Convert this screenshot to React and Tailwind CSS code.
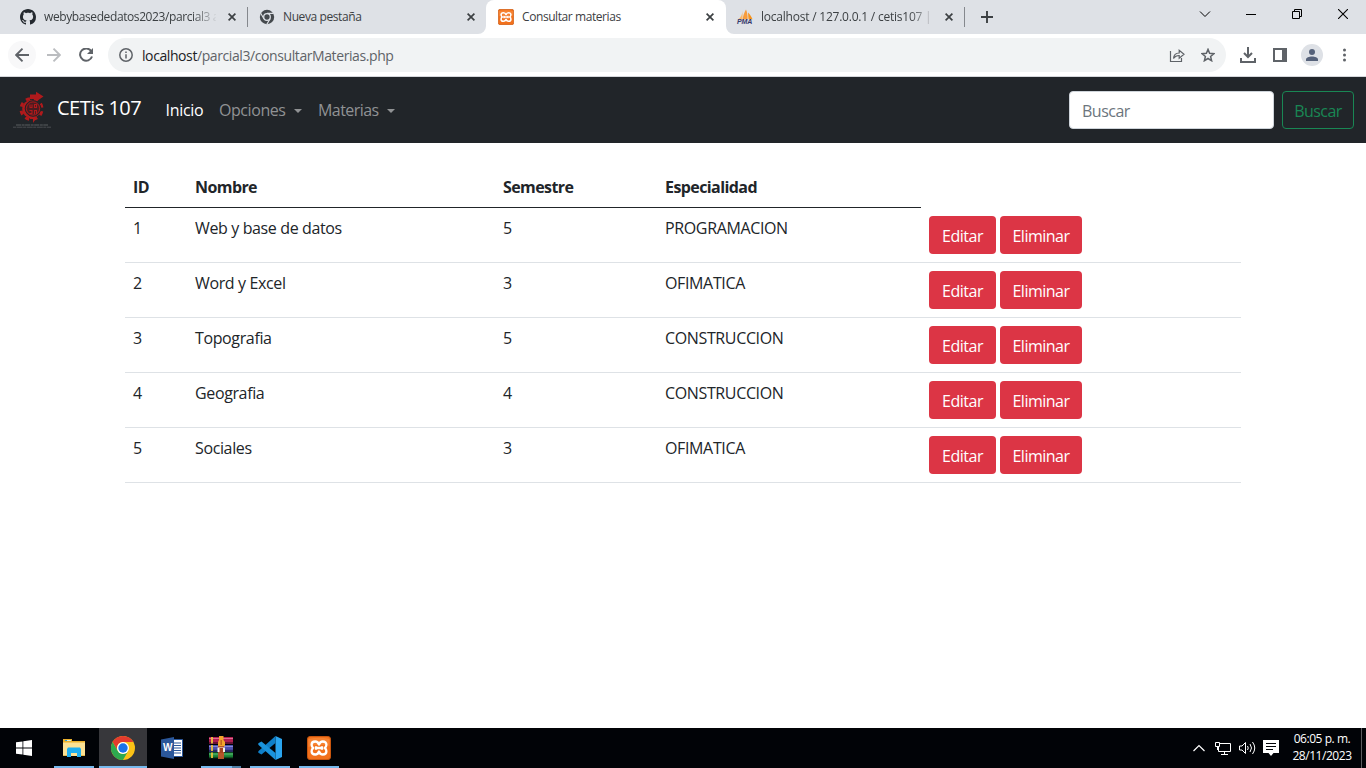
import React from "react";

const rows = [
  { id: 1, nombre: "Web y base de datos", semestre: 5, especialidad: "PROGRAMACION" },
  { id: 2, nombre: "Word y Excel", semestre: 3, especialidad: "OFIMATICA" },
  { id: 3, nombre: "Topografia", semestre: 5, especialidad: "CONSTRUCCION" },
  { id: 4, nombre: "Geografia", semestre: 4, especialidad: "CONSTRUCCION" },
  { id: 5, nombre: "Sociales", semestre: 3, especialidad: "OFIMATICA" },
];

function GithubIcon() {
  return (
    <svg className="size-4 shrink-0" viewBox="0 0 16 16" fill="#24292f">
      <path d="M8 0C3.58 0 0 3.58 0 8c0 3.54 2.29 6.53 5.47 7.59.4.07.55-.17.55-.38 0-.19-.01-.82-.01-1.49-2.01.37-2.53-.49-2.69-.94-.09-.23-.48-.94-.82-1.13-.28-.15-.68-.52-.01-.53.63-.01 1.08.58 1.23.82.72 1.21 1.87.87 2.33.66.07-.52.28-.87.51-1.07-1.78-.2-3.64-.89-3.64-3.95 0-.87.31-1.59.82-2.15-.08-.2-.36-1.02.08-2.12 0 0 .67-.21 2.2.82.64-.18 1.32-.27 2-.27s1.36.09 2 .27c1.53-1.04 2.2-.82 2.2-.82.44 1.1.16 1.92.08 2.12.51.56.82 1.27.82 2.15 0 3.07-1.87 3.75-3.65 3.95.29.25.54.73.54 1.48 0 1.07-.01 1.93-.01 2.2 0 .21.15.46.55.38A8.01 8.01 0 0 0 16 8c0-4.42-3.58-8-8-8z" />
    </svg>
  );
}

function ChromeMonoIcon() {
  return (
    <svg className="size-4 shrink-0" viewBox="0 0 16 16">
      <circle cx="8" cy="8" r="7.2" fill="#45494d" />
      <circle cx="8" cy="8" r="3.3" fill="#45494d" stroke="#dee1e6" strokeWidth="1.3" />
      <path d="M8 4.4h6.6M4.9 9.8 1.7 4.2M11.1 9.8 7.8 15.4" stroke="#dee1e6" strokeWidth="1.1" />
    </svg>
  );
}

function XamppIcon({ className }) {
  return (
    <svg className={className} viewBox="0 0 24 24">
      <rect x="0.5" y="0.5" width="23" height="23" rx="2.6" fill="#f2711c" stroke="#c9560e" />
      <path d="M1.500 3Q12 .5 22.500 3v7Q12 7 1.500 11z" fill="#fb9548" opacity=".5" />
      <path
        d="M12 8.500C11.300 6.500 10 5.500 8.200 5.500 6 5.500 4.600 6.900 4.600 8.800c0 1.400.6 2.500 1.700 3.200-1.100.7-1.700 1.800-1.700 3.200 0 1.900 1.400 3.300 3.600 3.300 1.800 0 3.100-1 3.800-3 .7 2 2 3 3.800 3 2.200 0 3.600-1.400 3.600-3.300 0-1.400-.6-2.500-1.700-3.200 1.100-.7 1.700-1.800 1.700-3.200 0-1.900-1.400-3.300-3.600-3.300-1.800 0-3.100 1-3.800 3zM9 10.300v3.400M15 10.300v3.400M9 12h6"
        fill="none"
        stroke="#fff"
        strokeWidth="2.300"
        strokeLinejoin="round"
      />
    </svg>
  );
}

function PmaIcon() {
  return (
    <span className="relative block size-4 shrink-0">
      <svg className="size-4" viewBox="0 0 16 16">
        <path d="M5.500 1.500C5.600 5 4 8.500 1 10.500l4.500-.3z" fill="#fbb868" />
        <path d="M9 .5C7 4 6 7 5.800 10.300h4.800C10.700 6.500 10.200 3 9 .5z" fill="#f89c3c" />
        <path d="M11 3.500c2 2 3.600 4.300 4.500 6.800h-4z" fill="#f7941d" />
      </svg>
      <b className="absolute top-[10px] left-0 block font-['Liberation_Sans'] text-[7px] leading-[6px] tracking-[-0.1px] text-[#35386b] italic">PMA</b>
    </span>
  );
}

function CloseX() {
  return (
    <svg className="size-[8px] shrink-0" viewBox="0 0 8 8">
      <path d="M.6.600l6.800 6.800M7.400.6.600 7.400" stroke="#3c4043" strokeWidth="1.700" />
    </svg>
  );
}

function Tab({ icon, title, active, fade, divider, className }) {
  return (
    <div
      className={
        "relative flex h-[34px] shrink-0 items-center " +
        (active ? "rounded-t-lg bg-white " : "") +
        className
      }
    >
      {active && (
        <>
          <svg className="absolute bottom-0 -left-2 size-2" viewBox="0 0 8 8"><path d="M8 0v8H0a8 8 0 0 0 8-8z" fill="#fff" /></svg>
          <svg className="absolute -right-2 bottom-0 size-2" viewBox="0 0 8 8"><path d="M0 0v8h8a8 8 0 0 1-8-8z" fill="#fff" /></svg>
        </>
      )}
      {icon}
      <div
        className={
          "ml-2 h-[18px] w-[172px] text-[12px] leading-[18px] whitespace-nowrap text-[#3c4043]" +
          (fade ? " [mask-image:linear-gradient(to_right,#000_148px,transparent_174px)]" : "")
        }
      >
        {title}
      </div>
      <div className="ml-3"><CloseX /></div>
      {divider && <div className="absolute top-[7px] right-0 h-5 w-px bg-[#85888d]" />}
    </div>
  );
}

function TabStrip() {
  return (
    <div className="flex h-[34px] bg-[#dee1e6] pl-2">
      <Tab icon={<GithubIcon />} title="webybasededatos2023/parcial3 a" className="w-[240px] pl-3 tracking-[-0.4px]" fade divider />
      <Tab icon={<ChromeMonoIcon />} title="Nueva pestaña" className="w-[238px] pl-[11px] tracking-[-0.4px]" />
      <Tab icon={<XamppIcon className="size-4 shrink-0" />} title="Consultar materias" className="w-[240px] pl-3 tracking-[-0.42px]" active />
      <Tab icon={<PmaIcon />} title="localhost / 127.0.0.1 / cetis107 | p" className="w-[239px] pl-[11px] tracking-[-0.22px]" fade divider />
      <svg className="mt-[11px] ml-4 size-3" viewBox="0 0 12 12"><path d="M6 0v12M0 6h12" stroke="#3c4043" strokeWidth="1.900" /></svg>
      <div className="mr-[18px] ml-auto flex h-7 items-center text-black">
        <svg className="w-3" viewBox="0 0 12 12" fill="none" stroke="currentColor"><path d="m1 3.500 5 5 5-5" /></svg>
        <svg className="ml-[35px] w-[10px]" viewBox="0 0 10 10" fill="none" stroke="currentColor"><path d="M0 5.500h10" /></svg>
        <svg className="ml-9 w-[10px]" viewBox="0 0 10 10" fill="none" stroke="currentColor"><path d="M.5 2.500h7v7h-7zM2.500 2.500v-2h7v7h-2" /></svg>
        <svg className="ml-9 w-[10px]" viewBox="0 0 10 10" fill="none" stroke="currentColor" strokeWidth="1.100"><path d="m0 0 10 10M10 0 0 10" /></svg>
      </div>
    </div>
  );
}

function Toolbar() {
  return (
    <div className="flex h-[43px] items-center border-b border-[#d5d7db] bg-white pl-2">
      <div className="flex size-7 items-center justify-center rounded-full bg-[#f8f8f9]">
        <svg className="size-[14px]" viewBox="0 0 14 14" fill="none" stroke="#5f6368" strokeWidth="1.900"><path d="M14 7H1.500M7.500.700 1.200 7l6.300 6.300" /></svg>
      </div>
      <svg className="ml-[11px] size-[14px]" viewBox="0 0 14 14" fill="none" stroke="#bbbdc0" strokeWidth="1.900"><path d="M0 7h12.500M6.500.700 12.800 7l-6.300 6.300" /></svg>
      <svg className="ml-[18px] size-[14px]" viewBox="0 0 14 14"><path d="M12.300 3.300A6.100 6.100 0 1 0 13 8.500" fill="none" stroke="#5f6368" strokeWidth="2" /><path d="M14 0v6H8z" fill="#5f6368" /></svg>
      <div className="ml-[15px] flex h-[34px] w-[1118px] items-center rounded-full bg-[#f1f3f4] pl-[11px]">
        <svg className="size-[14px]" viewBox="0 0 14 14"><circle cx="7" cy="7" r="6.200" fill="none" stroke="#5f6368" strokeWidth="1.500" /><path d="M7 6.200v4.300M7 3.500v1.500" stroke="#5f6368" strokeWidth="1.500" /></svg>
        <span className="ml-[9px] text-[14px] tracking-[-0.41px] text-[#5f6368]"><span className="text-[#202124]">localhost</span>/parcial3/consultarMaterias.php</span>
        <svg className="mr-4 ml-auto size-[16px]" viewBox="0 0 16 16" fill="none" stroke="#5f6368" strokeWidth="1.200"><path d="M1.500 4v10.500h11v-3.500M4.500 11.500c.3-3.600 2.300-5.400 5.700-5.500V3.200L15 7.300l-4.800 3.900V8.500c-2.600-.1-4.300.9-5.700 3z" /></svg>
        <svg className="mr-[11px] size-[14px]" viewBox="0 0 14 14" fill="none" stroke="#5f6368" strokeWidth="1.500"><path d="m7 1.400 1.600 3.900 4.200.4-3.200 2.800 1 4.200L7 10.500l-3.600 2.200 1-4.200-3.200-2.800 4.200-.4z" /></svg>
      </div>
      <svg className="ml-[14px] size-4" viewBox="0 0 16 16" fill="none" stroke="#5f6368" strokeWidth="2"><path d="M8 0v9.500M4 6l4 4 4-4M1 11v4h14v-4" /></svg>
      <svg className="ml-[17px] size-[14px]" viewBox="0 0 14 14"><path d="M1 1h12v12H1z" fill="none" stroke="#5f6368" strokeWidth="2" /><path d="M9 1h4v12H9z" fill="#5f6368" /></svg>
      <div className="ml-[14px] flex size-[22px] items-center justify-center rounded-full bg-[#dee1e6]">
        <svg className="size-3" viewBox="0 0 12 12" fill="#56627a"><circle cx="6" cy="3" r="3" /><path d="M0 12v-1.500C0 8.500 3 7.500 6 7.500s6 1 6 3V12z" /></svg>
      </div>
      <svg className="ml-[19px] h-[14px] w-[4px]" viewBox="0 0 4 14" fill="#5f6368"><circle cx="2.500" cy="2" r="1.500" /><circle cx="2.500" cy="7" r="1.500" /><circle cx="2.500" cy="12" r="1.500" /></svg>
    </div>
  );
}

function SchoolLogo() {
  return (
    <svg className="h-[38px] w-[38px] shrink-0" viewBox="0 0 38 38">
      <circle cx="18.500" cy="18" r="10.500" fill="none" stroke="#b01a1c" strokeWidth="3" strokeDasharray="4.200 4.047" transform="rotate(12 18.500 18)" />
      <circle cx="18.500" cy="18" r="9.300" fill="#b01a1c" />
      <path d="M17 3.500h6V.800l7.500 4.700-6.500 4.500V8h-7zM17 26h5v3l-2 3v-4h-3z" fill="#b01a1c" />
      <circle cx="20" cy="17.500" r="7.800" fill="#4a1c20" stroke="#212529" strokeWidth="1" />
      <circle cx="20" cy="17.500" r="6.600" fill="none" stroke="#b01a1c" strokeWidth=".9" />
      <path d="M17 13.500v3h2v-3M21.500 16.500v-3h2v3zM16.500 19.500h2.500v3h-2.500M21.500 23v-3.500h2V23" stroke="#b01a1c" strokeWidth="1.100" fill="none" />
      <path d="M3 34h32" stroke="#5b5e61" strokeDasharray="5 .6 3 .5" />
      <path d="M0 36.200h38" stroke="#4b4e51" strokeDasharray="3 .6 6 .5" />
    </svg>
  );
}

function Caret({ className }) {
  return <span className={"inline-block border-x-[4.800px] border-t-[4.800px] border-x-transparent border-t-current align-[3px] " + className} />;
}

function Navbar() {
  return (
    <nav className="flex h-[66px] items-center bg-[#212529] pr-3 pl-[13px]">
      <SchoolLogo />
      <span className="-mt-[5px] ml-[6px] w-[108px] text-[20px] leading-[30px] tracking-[-0.52px] whitespace-nowrap text-white">CETis 107</span>
      <span className="w-[54px] pl-[0.500px] text-[16px] tracking-[-0.3px] text-white">Inicio</span>
      <span className="w-[99px] text-[16px] tracking-[-0.43px] whitespace-nowrap text-[#909294]">Opciones<Caret className="ml-[8.500px]" /></span>
      <span className="text-[16px] tracking-[-0.57px] whitespace-nowrap text-[#909294]">Materias<Caret className="ml-[8.500px]" /></span>
      <input
        placeholder="Buscar"
        className="ml-auto h-[38px] w-[205px] rounded-[4px] border border-[#ced4da] bg-white px-3 pt-px text-[16px] tracking-[-0.5px] placeholder:text-[#6c757d]"
      />
      <button className="ml-2 h-[38px] w-[72px] rounded-[4px] border border-[#198754] pt-px text-[16px] tracking-[-0.6px] text-[#198754]">Buscar</button>
    </nav>
  );
}

function ActionButton({ className, children }) {
  return (
    <button className={"h-[38px] rounded-[4px] bg-[#dc3545] pt-px text-[16px] text-white " + className}>{children}</button>
  );
}

function MateriasTable() {
  return (
    <table className="mx-auto mt-6 w-[1116px] table-fixed border-separate border-spacing-0 text-left text-[16px] leading-6 text-[#212529]">
      <colgroup>
        <col className="w-[62px]" />
        <col className="w-[308px]" />
        <col className="w-[162px]" />
        <col className="w-[264px]" />
        <col className="w-[320px]" />
      </colgroup>
      <thead>
        <tr className="h-[41px] tracking-[-0.58px]">
          {["ID", "Nombre", "Semestre", "Especialidad"].map((h) => (
            <th key={h} className="border-b border-[#212529] px-2 font-bold">{h}</th>
          ))}
        </tr>
      </thead>
      <tbody>
        {rows.map((r) => (
          <tr key={r.id} className="h-[55px] align-top">
            <td className="border-b border-[#dee2e6] p-2">{r.id}</td>
            <td className="border-b border-[#dee2e6] p-2 tracking-[-0.37px]">{r.nombre}</td>
            <td className="border-b border-[#dee2e6] p-2">{r.semestre}</td>
            <td className="border-b border-[#dee2e6] p-2 tracking-[-0.36px]">{r.especialidad}</td>
            <td className="border-b border-[#dee2e6] p-2">
              <div className="flex gap-1">
                <ActionButton className="w-[67px] tracking-[-0.5px]">Editar</ActionButton>
                <ActionButton className="w-[82px] tracking-[-0.5px]">Eliminar</ActionButton>
              </div>
            </td>
          </tr>
        ))}
      </tbody>
    </table>
  );
}

function FolderIcon() {
  return (
    <svg className="h-[20px] w-[22px]" viewBox="0 0 22 20">
      <path d="M0 1h9v2h13v3H0z" fill="#eab02c" />
      <path d="M2 2.500h6" stroke="#d8f0e6" strokeWidth="1" />
      <path d="M2 2.500h2" stroke="#2f9fd0" strokeWidth="1" />
      <path d="M0 4.500h22V18H0z" fill="#fbe194" />
      <path d="M4 19v-8l1-1.500h12l1 1.500v8h-4v-4H8v4z" fill="#1eaef0" />
      <path d="M0 17.500h4M18 17.500h4" stroke="#e6bd52" />
    </svg>
  );
}

function ChromeIcon() {
  return (
    <svg className="size-6" viewBox="0 0 24 24">
      <circle cx="12" cy="12" r="12" fill="#fbc116" />
      <path d="M12 0a12 12 0 0 1 10.400 6H12a6 6 0 0 0-5.200 9L1.600 6A12 12 0 0 1 12 0z" fill="#e33b2e" />
      <path d="M1.600 6 6.800 15A6 6 0 0 0 17.200 15L12 24A12 12 0 0 1 1.600 6z" fill="#2da94f" />
      <circle cx="12" cy="12" r="6" fill="#fff" />
      <circle cx="12" cy="12" r="4.700" fill="#1a73e8" />
    </svg>
  );
}

function WordIcon() {
  return (
    <div className="relative size-[22px]">
      <svg className="size-[22px]" viewBox="0 0 22 22">
        <path d="M12 2.500h9.500v17H12z" fill="#fff" stroke="#2b579a" />
        <path d="M13 6h7M13 8.500h7M13 11h7M13 13.500h7M13 16h7" stroke="#2b579a" strokeWidth="1.200" />
        <path d="M0 2.500 13 0v22L0 19.500z" fill="#2b579a" />
      </svg>
      <b className="absolute top-[5px] left-[2px] block font-['Liberation_Sans'] text-[10px] leading-[12px] text-white">W</b>
    </div>
  );
}

function WinrarIcon() {
  return (
    <svg className="size-6" viewBox="0 0 24 24">
      <path d="M0 1h24v7H0z" fill="#b01e50" /><path d="M0 2.500h24" stroke="#dc6b92" /><path d="M0 7h24" stroke="#6b1236" strokeWidth="2" />
      <path d="M0 9h24v6.500H0z" fill="#4c4fb0" /><path d="M0 10.500h24" stroke="#8789d6" /><path d="M0 14.700h24" stroke="#2b2a68" strokeWidth="1.800" />
      <path d="M0 16.500h24V22H0z" fill="#1f8a3c" /><path d="M0 18h24" stroke="#5dbb72" /><path d="M0 21.500h24" stroke="#0e4c20" strokeWidth="1.500" />
      <path d="M3 1v6.500M3 9v6M3 16.500V22" stroke="#edc23e" strokeWidth="1.800" />
      <path d="M9 7h6v16H9z" fill="#b4552a" />
      <path d="M10 0h4.500v4l1.500 2v4H9V6l1-2z" fill="#f2a52c" />
      <path d="M12.200 4v5" stroke="#c2641f" strokeWidth="1.500" />
      <path d="M8.500 11.500h7.500v4.500H8.500z" fill="#f3efe8" />
      <path d="M10.500 12h3.500v5h-3.500z" fill="#a7431f" />
    </svg>
  );
}

function VsCodeIcon() {
  return (
    <svg className="size-6" viewBox="0 0 24 24">
      <path d="M17.500 0 24 3v18l-6.500 3z" fill="#2aa5ef" />
      <path d="M17.500 0v7L3.500 18.500.3 16.800v-1.600z" fill="#0f7fc8" />
      <path d="M17.500 24v-7L3.500 5.500.3 7.200v1.600z" fill="#1a93dc" />
    </svg>
  );
}

function TaskItem({ children, active, underline }) {
  return (
    <div className={"flex h-10 w-12 flex-col items-center " + (active ? "bg-[#37373b]" : "")}>
      <div className="flex h-[38px] items-center pt-[2px]">{children}</div>
      {underline}
    </div>
  );
}

function Taskbar() {
  const bar = <div className="h-[2px] w-10 bg-[#76b9ed]" />;
  return (
    <footer className="flex h-10 bg-[#010307] text-white">
      <TaskItem>
        <svg className="size-4" viewBox="0 0 16 16" fill="#fff"><path d="M0 2.300 6.500 1.400v6.200H0zM7.300 1.300 16 0v7.600H7.300zM0 8.400h6.500v6.200L0 13.700zM7.300 8.400H16V16l-8.700-1.300z" /></svg>
      </TaskItem>
      <div className="ml-[2px] flex gap-px">
        <TaskItem underline={bar}><FolderIcon /></TaskItem>
        <TaskItem active underline={<div className="h-[2px] w-12 bg-[#76b9ed]" />}><ChromeIcon /></TaskItem>
        <TaskItem><WordIcon /></TaskItem>
        <TaskItem underline={<div className="flex h-[2px] w-10 bg-[#4f7fa6]"><div className="w-[31px] bg-[#76b9ed]" /></div>}><WinrarIcon /></TaskItem>
        <TaskItem underline={bar}><VsCodeIcon /></TaskItem>
        <TaskItem underline={bar}><XamppIcon className="size-6" /></TaskItem>
      </div>
      <div className="ml-auto flex items-center">
        <svg className="w-3" viewBox="0 0 12 8" fill="none" stroke="#fff" strokeWidth="1.200"><path d="m.5 7 5.500-5.500L11.500 7" /></svg>
        <svg className="ml-[10px] w-4" viewBox="0 0 16 14" fill="none" stroke="#fff"><path d="M5 2.500h10.500v8H3.500V6M9.500 10.500v3M6 13.500h7M.5 1.500h4v4h-4zM2.500 5.500V9" /></svg>
        <svg className="ml-2 h-[14px] w-[17px]" viewBox="0 0 17 14" fill="none" stroke="#fff"><path d="M.5 5v4H3l3.500 3.500v-11L3 5zM8.500 5q1.500 2 0 4M11 3q3 4 0 8M13.500 1q4.500 6 0 12" /></svg>
        <svg className="ml-[7px] h-4 w-4" viewBox="0 0 16 16"><path d="M0 0h16v13h-5.500L8 16l-2.500-3H0z" fill="#fff" /><path d="M3 3.500h10M3 6.500h10M3 9.500h7" stroke="#010307" /></svg>
        <div className="mb-[2px] ml-[10px] w-[66px] text-center text-[12px] leading-[17px] tracking-[-0.45px] whitespace-nowrap">
          <div>06:05 p. m.</div>
          <div>28/11/2023</div>
        </div>
        <div className="mr-1 ml-[6px] h-10 w-px bg-[#5b5c5f]" />
      </div>
    </footer>
  );
}

export default function App() {
  return (
    <div className="flex h-[768px] w-[1366px] flex-col overflow-hidden bg-white font-['Open_Sans','Noto_Sans',sans-serif]">
      <TabStrip />
      <Toolbar />
      <Navbar />
      <main className="flex-1">
        <MateriasTable />
      </main>
      <Taskbar />
    </div>
  );
}
